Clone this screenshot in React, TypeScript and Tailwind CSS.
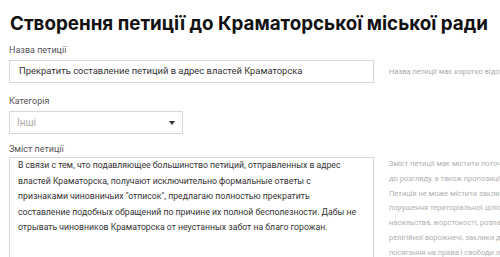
import { useState } from "react";

const helpLines = [
    "Зміст петиції має містити поточний стан справ, що потребують розв'язання",
    "до розгляду, а також пропозиції щодо їх вирішення.",
    "Петиція не може містити заклики до повалення конституційного ладу,",
    "порушення територіальної цілісності України, пропаганду війни,",
    "насильства, жорстокості, розпалювання міжетнічної, расової,",
    "релігійної ворожнечі, заклики до вчинення терористичних актів,",
    "посягання на права і свободи людини.",
];

const bodyLines = [
    "В связи с тем, что подавляющее большинство петиций, отправленных в адрес",
    "властей Краматорска, получают исключительно формальные ответы с",
    "признаками чиновничьих \"отписок\", предлагаю полностью прекратить",
    "составление подобных обращений по причине их полной бесполезности. Дабы не",
    "отрывать чиновников Краматорска от неустанных забот на благо горожан.",
];

function Label({ children }: { children: string }) {
    return <div className="text-[9px] leading-[12px] text-[#555]">{children}</div>;
}

export default function App() {
    const [title] = useState("Прекратить составление петиций в адрес властей Краматорска");

    return (
        <div className="h-[257px] w-[500px] overflow-hidden bg-white font-['Roboto',sans-serif]">
            <h1 className="whitespace-nowrap pl-[10px] pt-[11px] font-['Inter',sans-serif] text-[18.8px] font-bold leading-[26px] text-[#111]">
                Створення петиції до Краматорської міської ради
            </h1>

            <div className="pl-[9px] pt-[7px]">
                <Label>Назва петиції</Label>
                <div className="mt-[4px] flex items-center">
                    <div className="flex h-[23px] w-[365px] shrink-0 items-center border border-[#d6d6d6] px-[9px] text-[9.4px] text-[#333]">
                        <span className="whitespace-nowrap">{title}</span>
                    </div>
                    <div className="ml-[15px] whitespace-nowrap text-[7.5px] text-[#aaa]">
                        Назва петиції має коротко відображати суть звернення
                    </div>
                </div>

                <div className="mt-[12px]">
                    <Label>Категорія</Label>
                </div>
                <div className="mt-[4px] flex h-[23px] w-[174px] items-center justify-between border border-[#d6d6d6] pl-[7px] pr-[7px]">
                    <span className="text-[10px] text-[#aaa]">Інші</span>
                    <svg width="6" height="4" viewBox="0 0 6 4" aria-hidden>
                        <path d="M0 0 L6 0 L3 4 Z" fill="#333" />
                    </svg>
                </div>

                <div className="mt-[9px]">
                    <Label>Зміст петиції</Label>
                </div>
                <div className="mt-[2px] flex items-start">
                    <div className="h-[140px] w-[365px] shrink-0 border border-[#d6d6d6] px-[8px] text-[8.7px] leading-[15.6px] text-[#333]">
                        {bodyLines.map((line) => (
                            <div key={line} className="whitespace-nowrap">
                                {line}
                            </div>
                        ))}
                    </div>
                    <div className="ml-[15px] text-[7.5px] leading-[14.8px] text-[#b0b0b0]">
                        {helpLines.map((line) => (
                            <div key={line} className="whitespace-nowrap">
                                {line}
                            </div>
                        ))}
                    </div>
                </div>
            </div>
        </div>
    );
}
